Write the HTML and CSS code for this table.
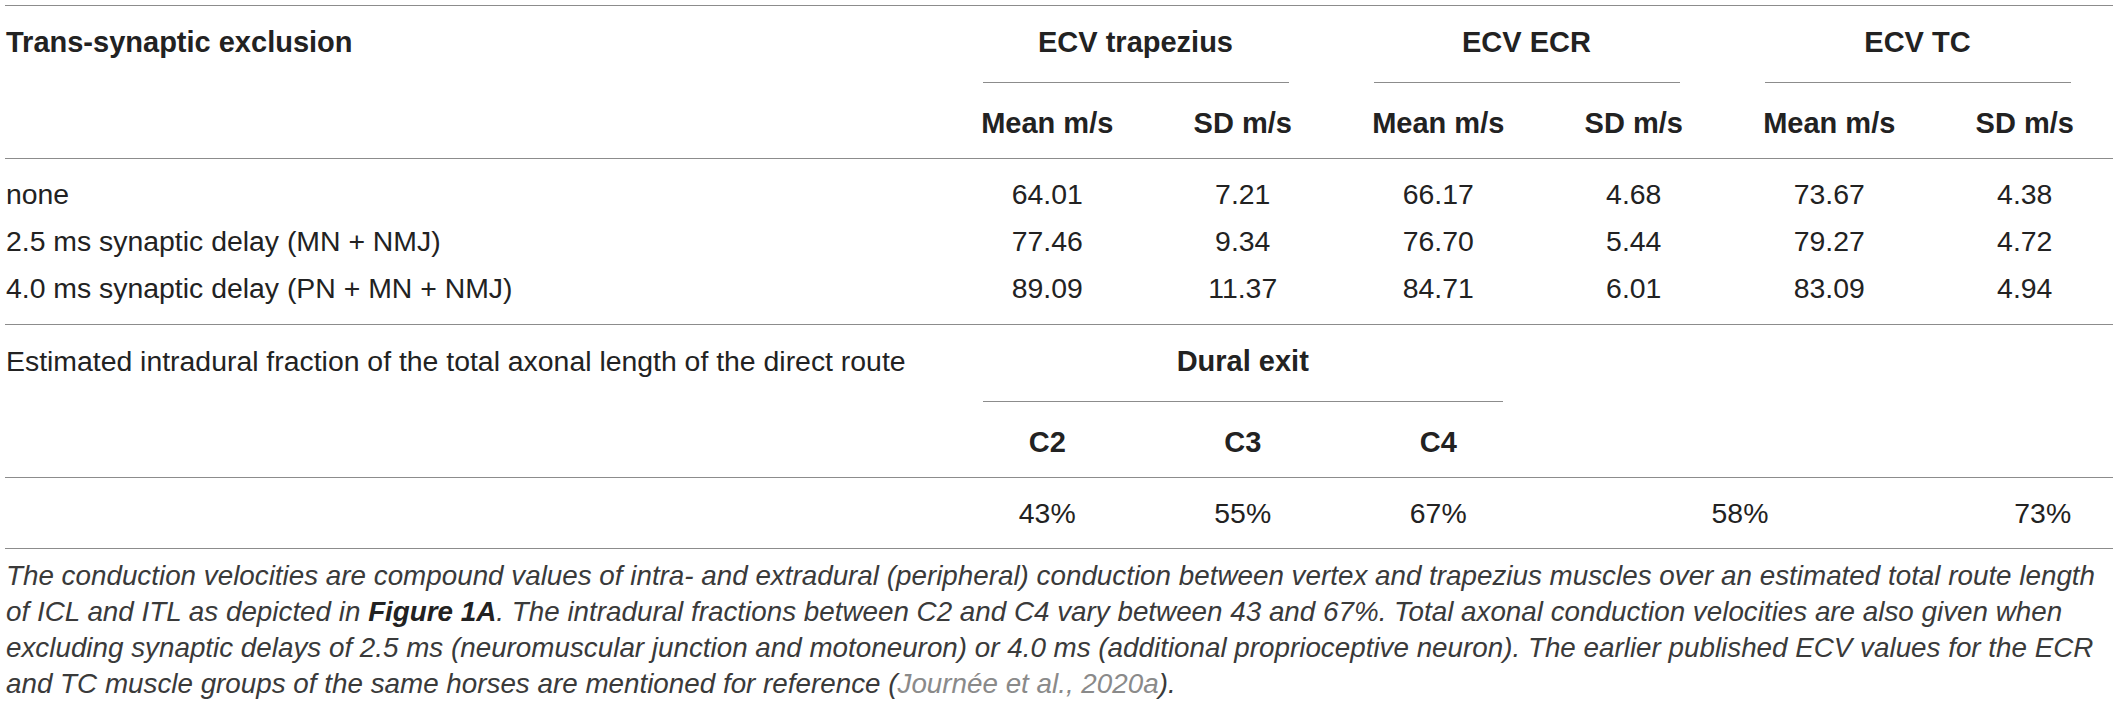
FILE: index.html
```html
<!DOCTYPE html>
<html lang="en">
<head>
<meta charset="utf-8">
<title>Table</title>
<link rel="stylesheet" href="styles.css">
</head>
<body>
<div class="page">
  <div class="sec sec-head">
    <div class="hcell first">Trans-synaptic exclusion</div>
    <div class="grp"><div class="grp-label">ECV trapezius</div><div class="grp-rule"></div></div>
    <div class="grp"><div class="grp-label">ECV ECR</div><div class="grp-rule"></div></div>
    <div class="grp"><div class="grp-label">ECV TC</div><div class="grp-rule"></div></div>
    <div class="sub">Mean m/s</div>
    <div class="sub">SD m/s</div>
    <div class="sub">Mean m/s</div>
    <div class="sub">SD m/s</div>
    <div class="sub">Mean m/s</div>
    <div class="sub">SD m/s</div>
  </div>
  <div class="sec sec-body">
    <div class="lab">none</div>
    <div class="num">64.01</div><div class="num">7.21</div><div class="num">66.17</div><div class="num">4.68</div><div class="num">73.67</div><div class="num">4.38</div>
    <div class="lab">2.5 ms synaptic delay (MN + NMJ)</div>
    <div class="num">77.46</div><div class="num">9.34</div><div class="num">76.70</div><div class="num">5.44</div><div class="num">79.27</div><div class="num">4.72</div>
    <div class="lab">4.0 ms synaptic delay (PN + MN + NMJ)</div>
    <div class="num">89.09</div><div class="num">11.37</div><div class="num">84.71</div><div class="num">6.01</div><div class="num">83.09</div><div class="num">4.94</div>
  </div>
  <div class="sec2 sec-dural">
    <div class="est">Estimated intradural fraction of the total axonal length of the direct route</div>
    <div class="dural"><div class="dural-label">Dural exit</div><div class="dural-rule"></div></div>
    <div class="sub c2">C2</div>
    <div class="sub">C3</div>
    <div class="sub">C4</div>
  </div>
  <div class="sec2 sec-pct">
    <div class="pct p2">43%</div>
    <div class="pct">55%</div>
    <div class="pct">67%</div>
    <div class="pct">58%</div>
    <div class="pct pct-last">73%</div>
  </div>
  <p class="caption">The conduction velocities are compound values of intra- and extradural (peripheral) conduction between vertex and trapezius muscles over an estimated total route length of ICL and ITL as depicted in <b>Figure 1A</b>. The intradural fractions between C2 and C4 vary between 43 and 67%. Total axonal conduction velocities are also given when excluding synaptic delays of 2.5 ms (neuromuscular junction and motoneuron) or 4.0 ms (additional proprioceptive neuron). The earlier published ECV values for the ECR and TC muscle groups of the same horses are mentioned for reference (<span class="ref">Journée et al., 2020a</span>).</p>
</div>
</body>
</html>
```
FILE: styles.css
```css
html, body {
  margin: 0;
  padding: 0;
  background: #ffffff;
}

body {
  font-family: "Liberation Sans", Arial, Helvetica, sans-serif;
  color: #222222;
}

.page {
  width: 2108px;
  padding: 5px 5px 0 5px;
}

.sec {
  display: grid;
  grid-template-columns: 935px repeat(6, 195.5px);
  border-top: 1px solid #8c8c8c;
}

.sec2 {
  display: grid;
  grid-template-columns: 935px 195.5px 195.5px 195.5px 408px 178.5px;
  border-top: 1px solid #8c8c8c;
}

.hcell {
  font-weight: bold;
  font-size: 29px;
  line-height: 34px;
  padding-top: 19px;
}

.first {
  grid-row: span 2;
  padding-left: 1px;
  text-align: left;
}

.grp {
  grid-column: span 2;
  padding-top: 19px;
  display: flex;
  flex-direction: column;
}

.grp-label {
  font-weight: bold;
  font-size: 29px;
  line-height: 34px;
  text-align: center;
  margin-bottom: 23px;
}

.grp-rule {
  height: 1px;
  background: #8c8c8c;
  margin: 0 42px 0 43px;
}

.sub {
  font-weight: bold;
  font-size: 29px;
  line-height: 34px;
  text-align: center;
  padding: 23px 0 18px 19px;
}

.c2 {
  grid-column: 2;
}

.sec-body {
  padding: 12px 0;
}

.lab, .num {
  font-size: 28.4px;
  line-height: 47px;
}

.lab {
  padding-left: 1px;
}

.num {
  text-align: center;
  padding-left: 19px;
}

.est {
  grid-column: 1;
  font-size: 28.4px;
  line-height: 34px;
  padding: 19px 0 0 1px;
}

.dural {
  grid-column: 2 / span 3;
  padding-top: 19px;
  display: flex;
  flex-direction: column;
}

.dural-label {
  font-weight: bold;
  font-size: 29px;
  line-height: 34px;
  text-align: center;
  padding-left: 19px;
  margin-bottom: 23px;
}

.dural-rule {
  height: 1px;
  background: #8c8c8c;
  margin: 0 23.5px 0 43px;
}

.sec-pct {
  border-bottom: 1px solid #8c8c8c;
}

.pct {
  font-size: 28.4px;
  line-height: 34px;
  text-align: center;
  padding: 18px 0 18px 19px;
}

.p2 {
  grid-column: 2;
}

.pct-last {
  padding-left: 38px;
}

.caption {
  margin: 9px 0 0 0;
  padding-left: 1px;
  font-style: italic;
  font-size: 27.8px;
  line-height: 36px;
  color: #3a3a3a;
}

.caption b {
  font-weight: bold;
  color: #222222;
}

.ref {
  color: #8a8a8a;
}
```
